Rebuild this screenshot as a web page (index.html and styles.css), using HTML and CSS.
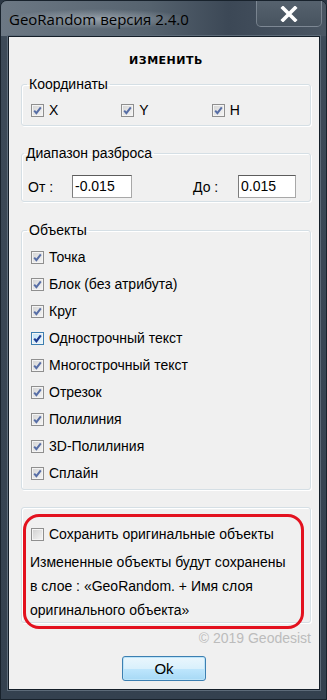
FILE: index.html
```html
<!DOCTYPE html>
<html lang="ru">
<head>
    <meta charset="UTF-8">
    <meta name="viewport" content="width=device-width, initial-scale=1.0">
    <title>GeoRandom версия 2.4.0</title>
    <link rel="stylesheet" href="styles.css">
</head>
<body>
    <div class="window">
        <div class="titlebar">
            <span class="title">GeoRandom версия 2.4.0</span>
            <div class="close-btn">
                <svg width="18" height="16" viewBox="0 0 18 16">
                    <path d="M3 2 L15 14 M15 2 L3 14" stroke="#fff" stroke-width="3.6" stroke-linecap="square"/>
                </svg>
            </div>
        </div>

        <div class="client">
            <div class="heading">ИЗМЕНИТЬ</div>

            <fieldset class="group group-coords">
                <legend>Координаты</legend>
                <div class="coords">
                    <label class="check coord"><span class="box"></span>X</label>
                    <label class="check coord"><span class="box"></span>Y</label>
                    <label class="check coord"><span class="box"></span>H</label>
                </div>
            </fieldset>

            <fieldset class="group group-range">
                <legend>Диапазон разброса</legend>
                <div class="range">
                    <span class="range-label">От :</span>
                    <input class="field field-from" type="text" value="-0.015">
                    <span class="range-label range-label-to">До :</span>
                    <input class="field field-to" type="text" value="0.015">
                </div>
            </fieldset>

            <fieldset class="group group-objects">
                <legend>Объекты</legend>
                <label class="check row"><span class="box"></span>Точка</label>
                <label class="check row"><span class="box"></span>Блок (без атрибута)</label>
                <label class="check row"><span class="box"></span>Круг</label>
                <label class="check row"><span class="box box-hot"></span>Однострочный текст</label>
                <label class="check row"><span class="box"></span>Многострочный текст</label>
                <label class="check row"><span class="box"></span>Отрезок</label>
                <label class="check row"><span class="box"></span>Полилиния</label>
                <label class="check row"><span class="box"></span>3D-Полилиния</label>
                <label class="check row"><span class="box"></span>Сплайн</label>
            </fieldset>

            <fieldset class="group group-keep">
                <label class="check keep"><span class="box box-empty"></span>Сохранить оригинальные объекты</label>
                <p class="note">Измененные объекты будут сохранены<br>в слое : «GeoRandom. + Имя слоя<br>оригинального объекта»</p>
                <div class="marker"></div>
            </fieldset>

            <div class="copyright">© 2019 Geodesist</div>

            <div class="actions">
                <button class="ok-btn">Ok</button>
            </div>
        </div>
    </div>
</body>
</html>
```

FILE: styles.css
```css
* {
    box-sizing: border-box;
}

body {
    margin: 0;
    font-family: 'Liberation Sans', Arial, sans-serif;
    font-size: 14px;
    color: #000;
    background: #2b3744;
}

.window {
    width: 327px;
    height: 700px;
    border: 1px solid #18222c;
    border-radius: 7px 7px 0 0;
    background: linear-gradient(180deg, #4f5c69 0px, #3d4a58 40px, #34414f 100%);
    display: flex;
    flex-direction: column;
}

/* title bar */
.titlebar {
    height: 35px;
    display: flex;
    justify-content: space-between;
    align-items: flex-start;
    padding-left: 8px;
    background: linear-gradient(90deg, #6c7884 0%, #56636f 45%, #3c4856 70%, #4a5663 100%);
    border-radius: 6px 6px 0 0;
}

.title {
    font-family: 'Open Sans', 'Noto Sans', sans-serif;
    font-size: 15px;
    margin-top: 8px;
    color: #000;
    padding: 0 4px;
    margin-left: -4px;
    background: radial-gradient(ellipse at center, rgba(220, 226, 232, 0.45) 0%, rgba(220, 226, 232, 0) 70%);
}

.close-btn {
    width: 66px;
    height: 26px;
    margin-right: 4px;
    border: 1px solid rgba(200, 210, 220, 0.35);
    border-top: none;
    border-radius: 0 0 5px 5px;
    background: linear-gradient(180deg, #56626e, #47535f);
    display: flex;
    align-items: center;
    justify-content: center;
}

/* client area */
.client {
    flex: 1;
    margin: 0 6px 9px 7px;
    border: 1px solid #141e28;
    box-shadow: 0 0 0 1px #5d6b79;
    background: #f0f0f0;
    padding: 0 8px 0 12px;
    display: flex;
    flex-direction: column;
}

.heading {
    margin-top: 17px;
    height: 14px;
    line-height: 14px;
    text-align: center;
    font-family: 'DejaVu Sans', sans-serif;
    font-weight: bold;
    font-size: 11px;
    letter-spacing: 0.5px;
}

/* group boxes */
.group {
    margin: 0;
    min-width: 0;
    border: 1px solid #d5dfe5;
    border-radius: 3px;
    box-shadow: inset 1px 1px 0 #fff, 1px 1px 0 #fff;
}

.group legend {
    padding: 0 2px;
    margin-left: -4px;
    line-height: 16px;
    height: 16px;
}

.group-coords {
    margin-top: 8px;
    padding: 10px 8px 7px 9px;
}

.coords {
    display: flex;
}

.check {
    display: flex;
    align-items: center;
    height: 16px;
    line-height: 16px;
}

.coord {
    width: 91px;
}

.box {
    width: 13px;
    height: 13px;
    margin-right: 5px;
    flex-shrink: 0;
    border: 1px solid #8f8f8f;
    background-image: url("data:image/svg+xml,%3Csvg xmlns='http://www.w3.org/2000/svg' width='11' height='11'%3E%3Cpath d='M2.2 5.6 L4.4 8.2 L8.8 2.4' stroke='%23576ea6' stroke-width='2' fill='none'/%3E%3C/svg%3E"),
        linear-gradient(135deg, #d3d3d3, #f6f6f6);
    box-shadow: inset 0 0 0 1px #f4f4f4;
}

.box-hot {
    border-color: #3c7fb1;
    background-image: url("data:image/svg+xml,%3Csvg xmlns='http://www.w3.org/2000/svg' width='11' height='11'%3E%3Cpath d='M2.2 5.6 L4.4 8.2 L8.8 2.4' stroke='%231f3c93' stroke-width='2.2' fill='none'/%3E%3C/svg%3E"),
        linear-gradient(135deg, #bfe2f8, #eaf6fd);
}

.box-empty {
    background-image: linear-gradient(135deg, #cfcfcf, #f6f6f6);
}

/* range */
.group-range {
    margin-top: 19px;
    padding: 14px 8px 3px 6px;
}

.range {
    display: flex;
    align-items: center;
}

.range-label {
    width: 44px;
}

.range-label-to {
    width: 45px;
}

.field {
    height: 23px;
    border: 1px solid #7c7c7c;
    border-color: #5c5c5c #a8a8a8 #a8a8a8 #7c7c7c;
    background: #fff;
    font-family: 'Liberation Sans', Arial, sans-serif;
    font-size: 14px;
    padding: 0 2px 2px;
    outline: none;
}

.field-from {
    width: 60px;
    margin-right: 61px;
}

.field-to {
    width: 58px;
}

/* objects */
.group-objects {
    margin-top: 20px;
    padding: 6px 8px 2px 9px;
}

.row {
    height: 27px;
    line-height: 27px;
}

/* keep originals */
.group-keep {
    position: relative;
    margin-top: 17px;
    padding: 18px 8px 0 9px;
}

.note {
    margin: 8px 0 0 -1px;
    line-height: 24px;
}

.marker {
    position: absolute;
    left: 1px;
    top: 6px;
    width: 281px;
    height: 115px;
    border: 3px solid #e3121f;
    border-radius: 16px;
}

.copyright {
    margin-top: 7px;
    line-height: 16px;
    text-align: right;
    color: #bcbcbc;
    font-size: 14px;
}

.actions {
    display: flex;
    justify-content: center;
    margin-top: 10px;
    margin-left: -4px;
}

.ok-btn {
    width: 84px;
    height: 25px;
    border: 1px solid #3c7fb1;
    border-radius: 3px;
    background: linear-gradient(180deg, #eaf6fd 0%, #d9f0fc 50%, #bee6fd 51%, #a7d9f5 100%);
    box-shadow: inset 0 0 0 1px #bce4f9;
    font-family: 'Liberation Sans', Arial, sans-serif;
    font-size: 15px;
    color: #000;
    padding: 0;
}
```
